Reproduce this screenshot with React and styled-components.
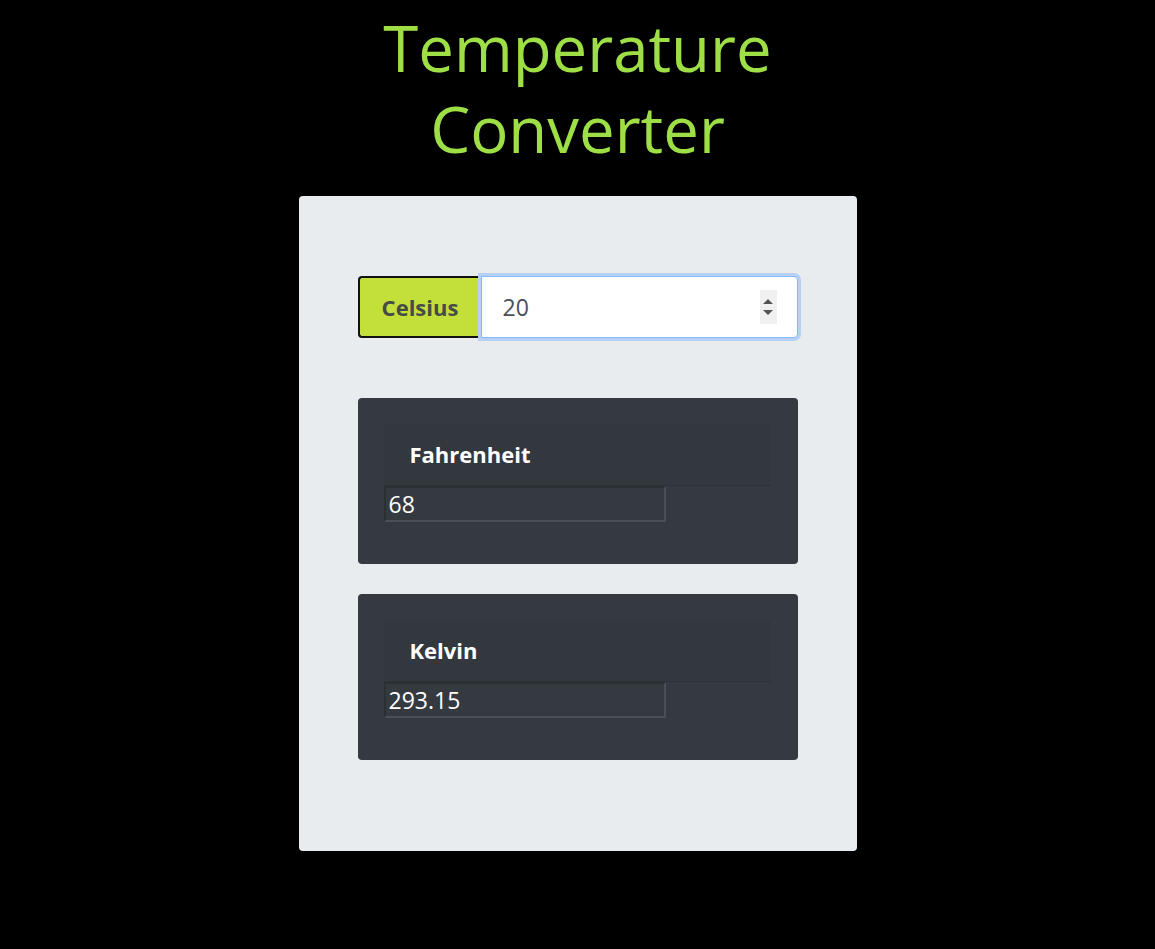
import React, { useState } from 'react';
import styled, { createGlobalStyle } from 'styled-components';

const GlobalStyle = createGlobalStyle`
  html, body {
    margin: 0;
    padding: 0;
    background: #000;
  }
  body {
    font-family: "Open Sans", "Noto Sans", sans-serif;
  }
`;

const Page = styled.div`
  display: flex;
  flex-direction: column;
  align-items: center;
  min-height: 949px;
`;

const Title = styled.h1`
  margin: 0;
  padding-top: 7px;
  width: 440px;
  text-align: center;
  font-family: "Open Sans", "Noto Sans", sans-serif;
  font-weight: 400;
  font-size: 63.5px;
  line-height: 81px;
  color: #9fdf46;
`;

const Panel = styled.div`
  margin-top: 27px;
  width: 558px;
  box-sizing: border-box;
  padding: 80px 59px 91px;
  background: #e9ecef;
  border-radius: 4px;
  display: flex;
  flex-direction: column;
  gap: 60px;
`;

const InputGroup = styled.div`
  display: flex;
  height: 62px;
`;

const UnitLabel = styled.label`
  flex: 0 0 123px;
  box-sizing: border-box;
  display: flex;
  align-items: center;
  justify-content: center;
  background: #c3e03a;
  border: 2px solid #111;
  border-right: none;
  border-radius: 4px 0 0 4px;
  font-weight: 700;
  font-size: 22px;
  color: #474b45;
`;

const Field = styled.div`
  position: relative;
  flex: 1;
  min-width: 0;
  display: flex;
`;

const MainInput = styled.input`
  flex: 1;
  min-width: 0;
  box-sizing: border-box;
  border: 1px solid #86b7fe;
  border-radius: 0 4px 4px 0;
  box-shadow: 0 0 0 3px #b6d1f3;
  outline: none;
  padding: 0 21px;
  font-family: "Open Sans", "Noto Sans", sans-serif;
  font-size: 23px;
  color: #495057;
  background: #fff;
`;

const Spinner = styled.div`
  position: absolute;
  right: 21px;
  top: 14px;
  width: 17px;
  height: 34px;
  background: #f0f0f0;
  display: flex;
  flex-direction: column;
  align-items: center;
  justify-content: center;
  gap: 6px;
`;

const Arrow = styled.span`
  width: 0;
  height: 0;
  border-left: 5px solid transparent;
  border-right: 5px solid transparent;
  ${(p) => (p.$up ? 'border-bottom: 5px solid #555;' : 'border-top: 5px solid #555;')}
`;

const CardList = styled.div`
  display: flex;
  flex-direction: column;
  gap: 30px;
`;

const ResultCard = styled.div`
  background: #343a40;
  border-radius: 4px;
  height: 166px;
  box-sizing: border-box;
  padding: 26px 27px 0 26px;
`;

const CardHeader = styled.div`
  height: 62px;
  box-sizing: border-box;
  padding: 0 26px 2px;
  display: flex;
  align-items: center;
  background: rgba(0, 0, 0, 0.03);
  border-bottom: 1px solid rgba(0, 0, 0, 0.125);
  color: #fff;
  font-weight: 700;
  font-size: 22px;
`;

const ResultInput = styled.input`
  display: block;
  width: 282px;
  height: 36px;
  box-sizing: border-box;
  margin: 0;
  padding: 0 3px;
  background: #343a40;
  color: #fff;
  border: 2px solid;
  border-color: #2b3035 #4a5057 #4a5057 #2b3035;
  outline: none;
  font-family: "Open Sans", "Noto Sans", sans-serif;
  font-size: 23px;
`;

const App = () => {
  const [celsius, setCelsius] = useState('20');
  const c = parseFloat(celsius);
  const fahrenheit = isNaN(c) ? '' : String(Math.round((c * 9 / 5 + 32) * 100) / 100);
  const kelvin = isNaN(c) ? '' : String(Math.round((c + 273.15) * 100) / 100);

  return (
    <Page>
      <GlobalStyle />
      <Title>Temperature Converter</Title>
      <Panel>
        <InputGroup>
          <UnitLabel htmlFor="celsius">Celsius</UnitLabel>
          <Field>
            <MainInput
              id="celsius"
              type="text"
              value={celsius}
              onChange={(e) => setCelsius(e.target.value)}
            />
            <Spinner>
              <Arrow $up />
              <Arrow />
            </Spinner>
          </Field>
        </InputGroup>
        <CardList>
          <ResultCard>
            <CardHeader>Fahrenheit</CardHeader>
            <ResultInput readOnly value={fahrenheit} />
          </ResultCard>
          <ResultCard>
            <CardHeader>Kelvin</CardHeader>
            <ResultInput readOnly value={kelvin} />
          </ResultCard>
        </CardList>
      </Panel>
    </Page>
  );
};

export default App;
